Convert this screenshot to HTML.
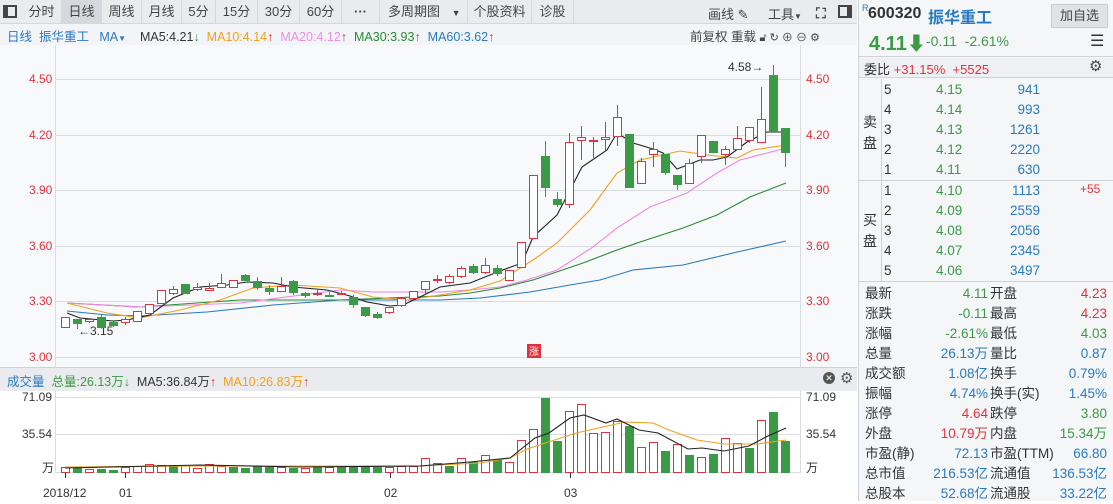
<!DOCTYPE html>
<html><head><meta charset="utf-8"><style>
*{margin:0;padding:0;box-sizing:border-box}
body{width:1113px;height:501px;overflow:hidden;background:#fff;font-family:"Liberation Sans","Noto Sans CJK SC",sans-serif;font-size:13px;color:#333;position:relative}
.a{position:absolute;white-space:nowrap}
.tb{position:absolute;left:0;top:0;width:857px;height:24px;background:#e9ebee;border-bottom:1px solid #d4d7dc}
.tab{position:absolute;top:0;height:24px;line-height:24px;font-size:13px;color:#444;text-align:center;border-right:1px solid #d4d7dc}
.g{color:#3a9a45}.r{color:#e0323c}.b{color:#2a7ac0}
.rt{position:absolute;left:858px;width:255px;border-left:1px solid #cfd3d8}
.row{position:absolute;height:20px;line-height:20px;font-size:13px}
</style></head><body>
<div class="tb"></div>
<div class="a" style="left:3px;top:5px;width:14px;height:13px;border:2px solid #444;border-left-width:5px"></div>
<div class="tab" style="left:22px;width:40px">分时</div>
<div class="tab" style="left:62px;width:40px;background:#d5d8dd">日线</div>
<div class="tab" style="left:102px;width:40px">周线</div>
<div class="tab" style="left:142px;width:40px">月线</div>
<div class="tab" style="left:182px;width:34px">5分</div>
<div class="tab" style="left:216px;width:42px">15分</div>
<div class="tab" style="left:258px;width:42px">30分</div>
<div class="tab" style="left:300px;width:42px">60分</div>
<div class="tab" style="left:342px;width:38px;font-weight:bold">···</div>
<div class="tab" style="left:380px;width:88px;text-align:left;padding-left:8px">多周期图 <span style="font-size:9px;margin-left:8px">▼</span></div>
<div class="tab" style="left:468px;width:64px">个股资料</div>
<div class="tab" style="left:532px;width:42px">诊股</div>
<div class="a" style="left:708px;top:4px;color:#444">画线 ✎</div>
<div class="a" style="left:768px;top:4px;color:#444">工具<span style="font-size:8px">▼</span></div>
<div class="a" style="left:816px;top:5px;font-size:14px;color:#444;font-weight:bold">⛶</div>
<div class="a" style="left:838px;top:5px;width:14px;height:13px;border:2px solid #444;border-right-width:5px"></div>

<div class="a" style="left:0;top:24px;width:857px;height:21px;background:#f2f4f7"></div>
<div class="a" style="left:7px;top:26px;font-size:12.5px"><span class="b">日线 &nbsp;振华重工</span> &nbsp;&nbsp;<span class="b">MA<span style="font-size:8px">▼</span></span> &nbsp;&nbsp;&nbsp;MA5:4.21<span class="g">↓</span> &nbsp;<span style="color:#f0a020">MA10:4.14</span><span class="r">↑</span> &nbsp;<span style="color:#e890e0">MA20:4.12</span><span class="r">↑</span> &nbsp;<span style="color:#2a8a35">MA30:3.93</span><span class="r">↑</span> &nbsp;<span class="b">MA60:3.62</span><span class="r">↑</span></div>
<div class="a" style="left:690px;top:26px;font-size:12.5px;color:#444">前复权 重载 <span style="font-size:11px">🔓︎ ↻ ⊕ ⊖ ⚙</span></div>

<svg class="a" style="left:0;top:45px" width="857" height="456" viewBox="0 45 857 456">
<rect x="0" y="45" width="857" height="322" fill="#f8f9fb"/>
<g stroke="#d9dde2" stroke-width="1">
<line x1="55" y1="79.5" x2="800" y2="79.5"/><line x1="55" y1="135.5" x2="800" y2="135.5"/><line x1="55" y1="190.5" x2="800" y2="190.5"/><line x1="55" y1="246.5" x2="800" y2="246.5"/><line x1="55" y1="301.5" x2="800" y2="301.5"/><line x1="55" y1="357.5" x2="800" y2="357.5"/>
<line x1="800.5" y1="45" x2="800.5" y2="367"/><line x1="55.5" y1="45" x2="55.5" y2="367"/>
</g>
<g font-size="12" fill="#e0323c" font-family="Liberation Sans">
<text x="29" y="83">4.50</text><text x="29" y="139">4.20</text><text x="29" y="194">3.90</text><text x="29" y="250">3.60</text><text x="29" y="305">3.30</text><text x="29" y="361">3.00</text>
<text x="806" y="83">4.50</text><text x="806" y="139">4.20</text><text x="806" y="194">3.90</text><text x="806" y="250">3.60</text><text x="806" y="305">3.30</text><text x="806" y="361">3.00</text>
</g>
<text x="728" y="71" font-size="12" fill="#333">4.58→</text>
<text x="78" y="335" font-size="12" fill="#333">←3.15</text>
<rect x="527" y="344" width="14" height="14" fill="#e0323c"/><text x="529" y="355" font-size="10" fill="#fff" font-family="Noto Sans CJK SC">涨</text>
<!-- MAs -->
<g fill="none" stroke-width="1.1">
<polyline stroke="#2a7ac0" points="67,311 107,315 140,316 207,312 273,305 340,300 440,300 480,298 530,292 570,285 600,280 633,270 683,265 733,253 786,241"/>
<polyline stroke="#2a8a35" points="67,303 140,307 240,300 340,300 440,296 470,293 500,288 533,280 583,263 617,250 640,242 683,228 717,215 750,197 786,183"/>
<polyline stroke="#ee88e0" points="67,303 140,307 240,303 340,290 373,292 440,292 470,290 500,287 527,280 557,270 593,247 617,228 650,207 687,193 717,173 740,160 786,148"/>
<polyline stroke="#f0a020" points="67,303 107,313 140,318 180,310 220,300 253,288 293,285 340,288 373,297 407,300 440,295 470,290 500,281 533,260 557,243 590,210 617,173 640,160 680,151 707,155 737,158 753,150 786,145"/>
<polyline stroke="#222" points="67,313 80,318 113,321 127,320 150,315 173,298 200,287 227,285 247,282 273,283 293,287 327,290 350,296 367,302 390,306 403,305 420,297 440,287 470,283 500,271 522,263 533,237 557,215 582,167 607,150 617,133 633,143 653,149 663,153 677,169 700,160 713,160 727,157 747,142 767,132 786,132"/>
</g>
<!-- candles -->
<g stroke-width="1">
<g stroke="#e0323c" fill="#fff">
<line x1="65.5" y1="317" x2="65.5" y2="327"/><rect x="61.5" y="317.5" width="8" height="10"/>
<line x1="89.5" y1="318" x2="89.5" y2="323"/><rect x="85.5" y="319.5" width="8" height="2"/>
<line x1="125.5" y1="317" x2="125.5" y2="325"/><rect x="121.5" y="319.5" width="8" height="3"/>
<rect x="133.5" y="311.5" width="8" height="10"/><rect x="145.5" y="304.5" width="8" height="9"/><rect x="157.5" y="290.5" width="8" height="13"/>
<line x1="173.5" y1="286" x2="173.5" y2="295"/><rect x="169.5" y="289.5" width="8" height="4"/>
<line x1="197.5" y1="283" x2="197.5" y2="291"/><rect x="193.5" y="287.5" width="8" height="2"/>
<line x1="209.5" y1="283" x2="209.5" y2="290"/><rect x="205.5" y="288.5" width="8" height="2"/>
<line x1="221.5" y1="274" x2="221.5" y2="287"/><rect x="217.5" y="283.5" width="8" height="4"/>
<rect x="229.5" y="280.5" width="8" height="7"/>
<line x1="281.5" y1="277" x2="281.5" y2="291"/><rect x="277.5" y="286.5" width="8" height="5"/>
<line x1="317.5" y1="290" x2="317.5" y2="296"/><rect x="313.5" y="293.5" width="8" height="1"/>
<line x1="341.5" y1="291" x2="341.5" y2="295"/><rect x="337.5" y="293.5" width="8" height="1"/>
<line x1="389.5" y1="307" x2="389.5" y2="314"/><rect x="385.5" y="307.5" width="8" height="5"/>
<line x1="401.5" y1="298" x2="401.5" y2="307"/><rect x="397.5" y="298.5" width="8" height="7"/>
<rect x="409.5" y="291.5" width="8" height="7"/>
<line x1="425.5" y1="281" x2="425.5" y2="294"/><rect x="421.5" y="281.5" width="8" height="8"/>
<line x1="437.5" y1="275" x2="437.5" y2="283"/><rect x="433.5" y="279.5" width="8" height="1"/>
<line x1="449.5" y1="274" x2="449.5" y2="284"/><rect x="445.5" y="276.5" width="8" height="6"/>
<line x1="461.5" y1="266" x2="461.5" y2="278"/><rect x="457.5" y="268.5" width="8" height="8"/>
<line x1="485.5" y1="258" x2="485.5" y2="274"/><rect x="481.5" y="265.5" width="8" height="7"/>
<rect x="505.5" y="270.5" width="8" height="10"/>
<rect x="517.5" y="242.5" width="8" height="25"/>
<rect x="529.5" y="175.5" width="8" height="63"/>
<line x1="569.5" y1="133" x2="569.5" y2="208"/><rect x="565.5" y="142.5" width="8" height="62"/>
<line x1="581.5" y1="126" x2="581.5" y2="160"/><rect x="577.5" y="137.5" width="8" height="3"/>
<line x1="593.5" y1="137" x2="593.5" y2="158"/><rect x="589.5" y="140.5" width="8" height="1"/>
<line x1="605.5" y1="122" x2="605.5" y2="150"/><rect x="601.5" y="137.5" width="8" height="2"/>
<line x1="617.5" y1="105" x2="617.5" y2="146"/><rect x="613.5" y="117.5" width="8" height="19"/>
<line x1="641.5" y1="158" x2="641.5" y2="183"/><rect x="637.5" y="161.5" width="8" height="22"/>
<line x1="653.5" y1="142" x2="653.5" y2="167"/><rect x="649.5" y="149.5" width="8" height="5"/>
<line x1="689.5" y1="159" x2="689.5" y2="183"/><rect x="685.5" y="163.5" width="8" height="20"/>
<line x1="701.5" y1="135" x2="701.5" y2="163"/><rect x="697.5" y="135.5" width="8" height="21"/>
<line x1="725.5" y1="146" x2="725.5" y2="165"/><rect x="721.5" y="149.5" width="8" height="5"/>
<line x1="737.5" y1="126" x2="737.5" y2="149"/><rect x="733.5" y="138.5" width="8" height="11"/>
<line x1="749.5" y1="127" x2="749.5" y2="143"/><rect x="745.5" y="127.5" width="8" height="13"/>
<line x1="761.5" y1="87" x2="761.5" y2="142"/><rect x="757.5" y="119.5" width="8" height="23"/>
</g>
<g stroke="#3a9a45" fill="#3a9a45">
<line x1="77.5" y1="319" x2="77.5" y2="329"/><rect x="73.5" y="319.5" width="8" height="4"/>
<line x1="101.5" y1="315" x2="101.5" y2="327"/><rect x="97.5" y="317.5" width="8" height="10"/>
<line x1="113.5" y1="320" x2="113.5" y2="327"/><rect x="109.5" y="322.5" width="8" height="3"/>
<rect x="181.5" y="284.5" width="8" height="9"/>
<line x1="245.5" y1="274" x2="245.5" y2="281"/><rect x="241.5" y="275.5" width="8" height="5"/>
<line x1="257.5" y1="277" x2="257.5" y2="290"/><rect x="253.5" y="281.5" width="8" height="6"/>
<line x1="269.5" y1="285" x2="269.5" y2="295"/><rect x="265.5" y="288.5" width="8" height="3"/>
<line x1="293.5" y1="280" x2="293.5" y2="295"/><rect x="289.5" y="281.5" width="8" height="11"/>
<line x1="305.5" y1="292" x2="305.5" y2="298"/><rect x="301.5" y="293.5" width="8" height="2"/>
<line x1="329.5" y1="292" x2="329.5" y2="297"/><rect x="325.5" y="295.5" width="8" height="1"/>
<line x1="353.5" y1="295" x2="353.5" y2="308"/><rect x="349.5" y="297.5" width="8" height="7"/>
<line x1="365.5" y1="307" x2="365.5" y2="317"/><rect x="361.5" y="307.5" width="8" height="8"/>
<line x1="377.5" y1="312" x2="377.5" y2="319"/><rect x="373.5" y="314.5" width="8" height="3"/>
<line x1="473.5" y1="264" x2="473.5" y2="274"/><rect x="469.5" y="266.5" width="8" height="6"/>
<line x1="497.5" y1="265" x2="497.5" y2="276"/><rect x="493.5" y="268.5" width="8" height="5"/>
<line x1="545.5" y1="141" x2="545.5" y2="197"/><rect x="541.5" y="156.5" width="8" height="31"/>
<line x1="557.5" y1="192" x2="557.5" y2="207"/><rect x="553.5" y="199.5" width="8" height="5"/>
<rect x="625.5" y="134.5" width="8" height="53"/>
<line x1="665.5" y1="154" x2="665.5" y2="175"/><rect x="661.5" y="154.5" width="8" height="18"/>
<line x1="677.5" y1="175" x2="677.5" y2="190"/><rect x="673.5" y="175.5" width="8" height="9"/>
<rect x="709.5" y="141.5" width="8" height="11"/>
<line x1="773.5" y1="65" x2="773.5" y2="131"/><rect x="769.5" y="75.5" width="8" height="56"/>
<line x1="785.5" y1="128" x2="785.5" y2="167"/><rect x="781.5" y="128.5" width="8" height="24"/>
</g>
</g>
<!-- volume -->
<rect x="0" y="367" width="857" height="24" fill="#e9ebee"/>
<line x1="0" y1="367.5" x2="857" y2="367.5" stroke="#cfd3d8"/>
<rect x="0" y="391" width="857" height="110" fill="#fff"/>
<g stroke="#d9dde2"><line x1="55" y1="397.5" x2="800" y2="397.5"/><line x1="55" y1="434.5" x2="800" y2="434.5"/><line x1="55" y1="472.5" x2="800" y2="472.5"/><line x1="55.5" y1="391" x2="55.5" y2="473"/><line x1="800.5" y1="391" x2="800.5" y2="473"/></g>
<g font-size="12" fill="#333"><text x="22" y="401">71.09</text><text x="22" y="438">35.54</text><text x="42" y="472" font-family="Noto Sans CJK SC">万</text><text x="806" y="401">71.09</text><text x="806" y="438">35.54</text><text x="806" y="472" font-family="Noto Sans CJK SC">万</text>
<text x="43" y="497">2018/12</text><text x="119" y="497">01</text><text x="384" y="497">02</text><text x="564" y="497">03</text></g>
<g stroke="#333"><line x1="65.5" y1="473" x2="65.5" y2="478"/><line x1="125.5" y1="473" x2="125.5" y2="478"/><line x1="390.5" y1="473" x2="390.5" y2="478"/><line x1="570.5" y1="473" x2="570.5" y2="478"/></g>
<g stroke="#e0323c" fill="#fff">
<rect x="61.5" y="467.5" width="8" height="5"/><rect x="85.5" y="469.5" width="8" height="3"/><rect x="121.5" y="467.5" width="8" height="5"/><rect x="133.5" y="466.5" width="8" height="6"/><rect x="145.5" y="464.5" width="8" height="8"/><rect x="157.5" y="465.5" width="8" height="7"/><rect x="181.5" y="465.5" width="8" height="7"/><rect x="193.5" y="468.5" width="8" height="4"/><rect x="205.5" y="464.5" width="8" height="8"/><rect x="217.5" y="466.5" width="8" height="6"/><rect x="277.5" y="467.5" width="8" height="5"/><rect x="301.5" y="468.5" width="8" height="4"/><rect x="325.5" y="467.5" width="8" height="5"/><rect x="385.5" y="467.5" width="8" height="5"/><rect x="397.5" y="466.5" width="8" height="6"/><rect x="409.5" y="466.5" width="8" height="6"/><rect x="421.5" y="458.5" width="8" height="14"/><rect x="433.5" y="463.5" width="8" height="9"/><rect x="457.5" y="458.5" width="8" height="14"/><rect x="481.5" y="455.5" width="8" height="17"/><rect x="505.5" y="462.5" width="8" height="10"/><rect x="517.5" y="440.5" width="8" height="32"/><rect x="529.5" y="429.5" width="8" height="43"/><rect x="565.5" y="411.5" width="8" height="61"/><rect x="577.5" y="404.5" width="8" height="68"/><rect x="589.5" y="433.5" width="8" height="39"/><rect x="601.5" y="432.5" width="8" height="40"/><rect x="613.5" y="421.5" width="8" height="51"/><rect x="637.5" y="447.5" width="8" height="25"/><rect x="649.5" y="442.5" width="8" height="30"/><rect x="673.5" y="444.5" width="8" height="28"/><rect x="697.5" y="457.5" width="8" height="15"/><rect x="721.5" y="438.5" width="8" height="34"/><rect x="733.5" y="443.5" width="8" height="29"/><rect x="757.5" y="420.5" width="8" height="52"/>
</g>
<g fill="#3a9a45">
<rect x="73" y="467" width="9" height="6"/><rect x="97" y="469" width="9" height="4"/><rect x="109" y="470" width="9" height="3"/><rect x="169" y="465" width="9" height="8"/><rect x="229" y="467" width="9" height="6"/><rect x="241" y="468" width="9" height="5"/><rect x="253" y="466" width="9" height="7"/><rect x="265" y="467" width="9" height="6"/><rect x="289" y="468" width="9" height="5"/><rect x="313" y="467" width="9" height="6"/><rect x="337" y="467" width="9" height="6"/><rect x="349" y="467" width="9" height="6"/><rect x="361" y="466" width="9" height="7"/><rect x="373" y="467" width="9" height="6"/><rect x="445" y="466" width="9" height="7"/><rect x="469" y="462" width="9" height="11"/><rect x="493" y="460" width="9" height="13"/><rect x="541" y="398" width="9" height="75"/><rect x="553" y="441" width="9" height="32"/><rect x="625" y="426" width="9" height="47"/><rect x="661" y="451" width="9" height="22"/><rect x="685" y="455" width="9" height="18"/><rect x="709" y="454" width="9" height="19"/><rect x="745" y="448" width="9" height="25"/><rect x="769" y="412" width="9" height="61"/><rect x="781" y="441" width="9" height="32"/></g>
<polyline fill="none" stroke="#f0a020" stroke-width="1.1" points="65,467 200,466 420,466 480,463 510,458 527,449 576,433 603,427 625,422 653,423 669,430 697,440 724,444 757,444 786,440"/>
<polyline fill="none" stroke="#222" stroke-width="1.1" points="65,468 200,465 300,467 420,466 470,462 510,458 535,438 549,433 570,418 584,415 606,423 617,419 639,430 658,433 688,449 702,448 724,451 749,446 768,436 786,428"/>
</svg>
<div class="a" style="left:7px;top:371px;font-size:12.5px"><span class="b">成交量</span> &nbsp;<span class="g">总量:26.13万↓</span> &nbsp;MA5:36.84万<span class="r">↑</span> &nbsp;<span style="color:#f0a020">MA10:26.83万</span><span class="r">↑</span></div>
<div class="a" style="left:823px;top:372px;width:12px;height:12px;border-radius:6px;background:#555;color:#fff;font-size:9px;line-height:12px;text-align:center">✕</div>
<div class="a" style="left:840px;top:369px;font-size:15px;color:#555">⚙</div>

<!-- right panel -->
<div class="rt" style="top:0;height:501px;background:#f4f6f8"></div>
<div class="a" style="left:862px;top:3px;font-size:9px;color:#2a7ac0">R</div>
<div class="a" style="left:868px;top:5px;font-size:16px;font-weight:bold;color:#333">600320</div>
<div class="a" style="left:928px;top:4px;font-size:16px;font-weight:bold;color:#2a7ac0">振华重工</div>
<div class="a" style="left:1051px;top:4px;width:57px;height:24px;background:#dfe2e6;border:1px solid #c8ccd2;border-radius:2px;text-align:center;line-height:22px;font-size:13px;color:#444">加自选</div>
<div class="a" style="left:869px;top:29px;font-size:20px;font-weight:bold;color:#3a9a45">4.11<span style="font-size:19px">⬇</span></div>
<div class="a" style="left:926px;top:33px;font-size:14px;color:#3a9a45">-0.11 &nbsp;-2.61%</div>
<div class="a" style="left:1090px;top:31px;font-size:16px;color:#333">☰</div>
<div class="a" style="left:859px;top:56px;width:254px;height:1px;background:#cfd3d8"></div>
<div class="a" style="left:859px;top:58px;width:254px;height:20px;background:#eef0f3;border-bottom:1px solid #cfd3d8"></div>
<div class="a" style="left:864px;top:59px;font-size:13px">委比 <span class="r">+31.15% &nbsp;+5525</span></div>
<div class="a" style="left:1089px;top:57px;font-size:15px;color:#444">⚙</div>
<div class="a" style="left:881px;top:79px;width:1px;height:202px;background:#cfd3d8"></div>
<div class="a" style="left:859px;top:180px;width:254px;height:1px;background:#cfd3d8"></div>
<div class="a" style="left:859px;top:281px;width:254px;height:1px;background:#cfd3d8"></div>
<div class="a" style="left:863px;top:112px;font-size:14px;line-height:21px;width:14px">卖<br>盘</div>
<div class="a" style="left:863px;top:210px;font-size:14px;line-height:21px;width:14px">买<br>盘</div>
<div class="a" style="left:884px;top:80px;font-size:13.5px;line-height:20px">5<br>4<br>3<br>2<br>1</div>
<div class="a g" style="left:936px;top:80px;font-size:13.5px;line-height:20px">4.15<br>4.14<br>4.13<br>4.12<br>4.11</div>
<div class="a b" style="left:1000px;top:80px;width:40px;text-align:right;font-size:13.5px;line-height:20px">941<br>993<br>1261<br>2220<br>630</div>
<div class="a" style="left:884px;top:181px;font-size:13.5px;line-height:20px">1<br>2<br>3<br>4<br>5</div>
<div class="a g" style="left:936px;top:181px;font-size:13.5px;line-height:20px">4.10<br>4.09<br>4.08<br>4.07<br>4.06</div>
<div class="a b" style="left:1000px;top:181px;width:40px;text-align:right;font-size:13.5px;line-height:20px">1113<br>2559<br>2056<br>2345<br>3497</div>
<div class="a r" style="left:1080px;top:182px;font-size:12px">+55</div>
<div class="a" style="left:865px;top:284px;font-size:13.5px;line-height:20px">最新<br>涨跌<br>涨幅<br>总量<br>成交额<br>振幅<br>涨停<br>外盘<br>市盈(静)<br>总市值<br>总股本</div>
<div class="a" style="left:930px;top:284px;width:58px;text-align:right;font-size:13.5px;line-height:20px"><span class="g">4.11</span><br><span class="g">-0.11</span><br><span class="g">-2.61%</span><br><span class="b">26.13万</span><br><span class="b">1.08亿</span><br><span class="b">4.74%</span><br><span class="r">4.64</span><br><span class="r">10.79万</span><br><span class="b">72.13</span><br><span class="b">216.53亿</span><br><span class="b">52.68亿</span></div>
<div class="a" style="left:990px;top:284px;font-size:13.5px;line-height:20px">开盘<br>最高<br>最低<br>量比<br>换手<br>换手(实)<br>跌停<br>内盘<br>市盈(TTM)<br>流通值<br>流通股</div>
<div class="a" style="left:1040px;top:284px;width:67px;text-align:right;font-size:13.5px;line-height:20px"><span class="r">4.23</span><br><span class="r">4.23</span><br><span class="g">4.03</span><br><span class="b">0.87</span><br><span class="b">0.79%</span><br><span class="b">1.45%</span><br><span class="g">3.80</span><br><span class="g">15.34万</span><br><span class="b">66.80</span><br><span class="b">136.53亿</span><br><span class="b">33.22亿</span></div>
</body></html>
